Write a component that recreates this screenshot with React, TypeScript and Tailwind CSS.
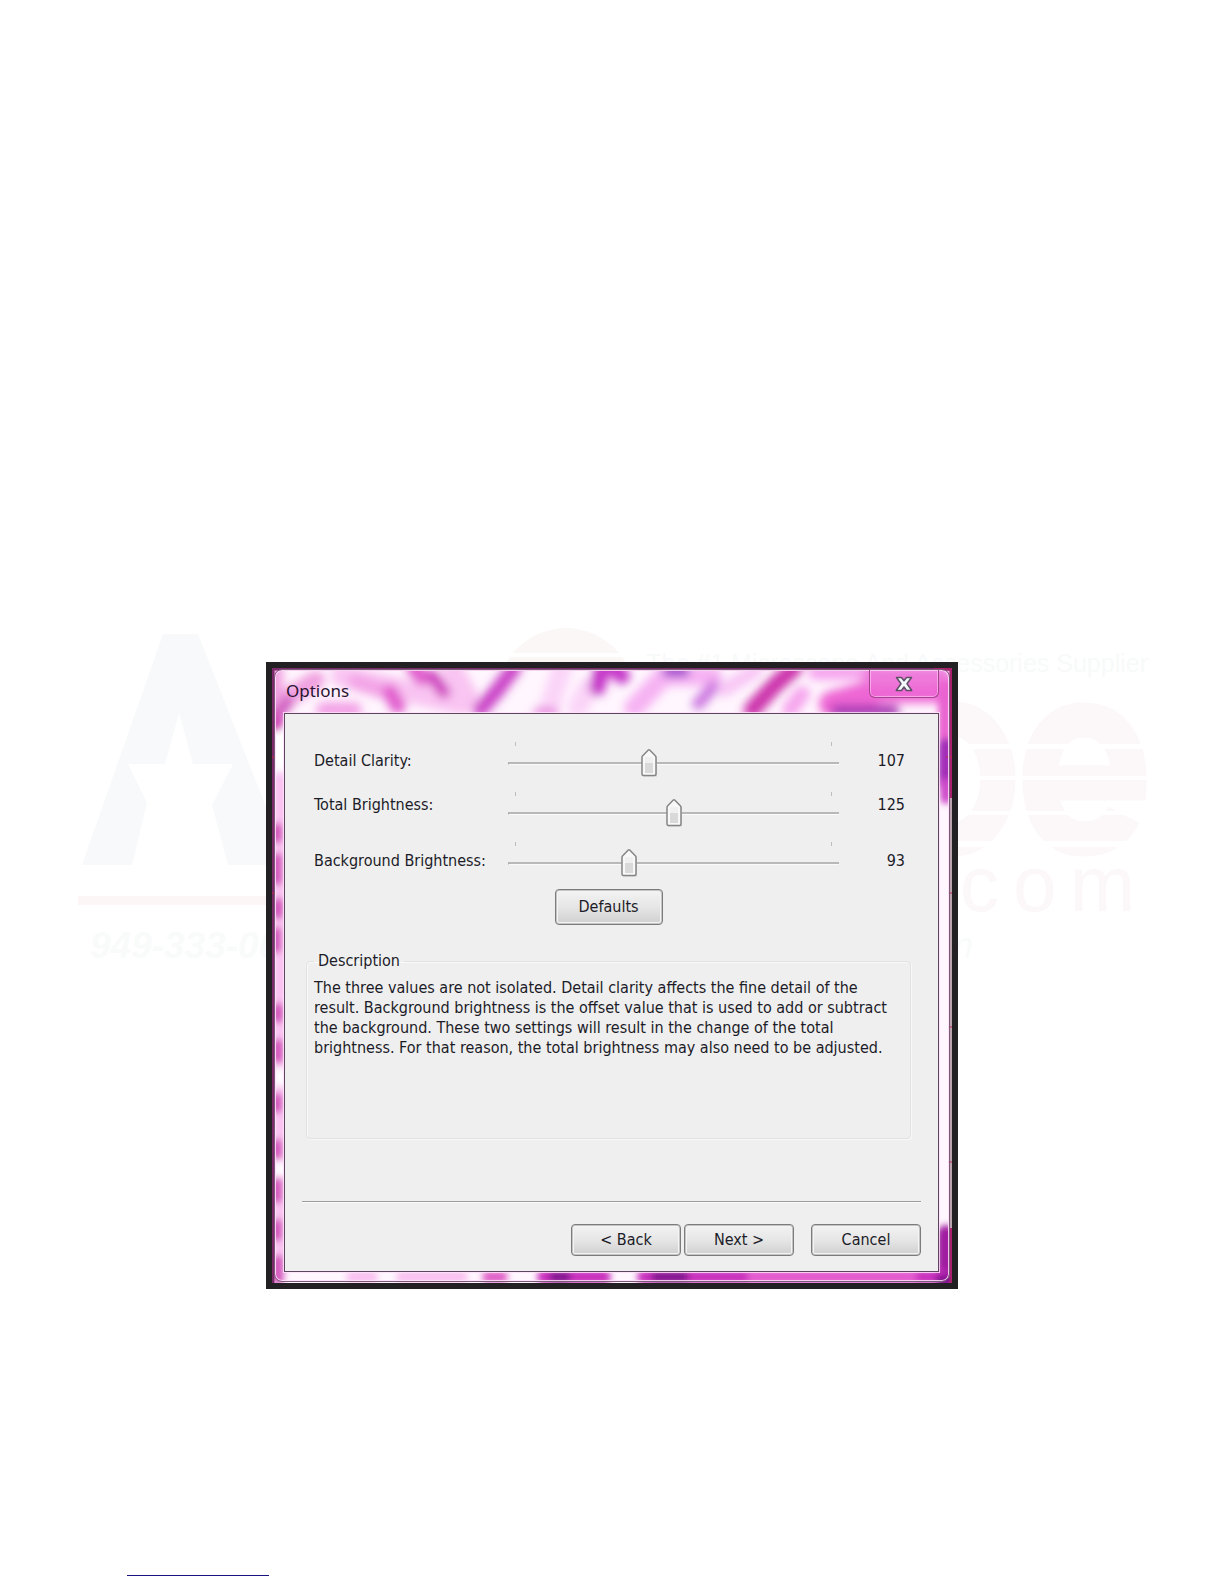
import { useState } from "react";

type Setting = {
  id: string;
  label: string;
  initial: number;
  labelClass: string;
};

const MIN = 10;
const MAX = 240;

const SETTINGS: Setting[] = [
  { id: "detail", label: "Detail Clarity:", initial: 107, labelClass: "pt-[9px]" },
  { id: "total", label: "Total Brightness:", initial: 125, labelClass: "pt-[3px]" },
  { id: "background", label: "Background Brightness:", initial: 93, labelClass: "pt-[9px]" },
];

const DEFAULTS = SETTINGS.map((s) => s.initial);

function Watermark() {
  return (
    <svg
      className="pointer-events-none absolute inset-x-0 top-[620px] w-full"
      viewBox="0 620 1224 360"
      aria-hidden="true"
    >
      <path
        fill="#f7f9fa"
        d="M163 634H198L289 865H228L212 805L233 764H193L179 713L165 764H128L147 803L132 865H82Z"
      />
      <rect x="78" y="896" width="400" height="9" fill="#fdf6f6" />
      <ellipse cx="566" cy="700" rx="70" ry="72" fill="#fcf7f7" />
      <rect x="480" y="653" width="180" height="4" fill="#fff" />
      <g fill="none" stroke="#fcf7f8" strokeWidth="35">
        <ellipse cx="955" cy="779" rx="43" ry="60" />
        <path d="M1040 783H1129C1130 744 1112 720 1084 720C1056 720 1040 744 1040 779C1040 816 1056 839 1084 839C1104 839 1116 830 1124 815" />
      </g>
      <g fill="#fff">
        <rect x="900" y="744" width="260" height="5" />
        <rect x="900" y="776" width="260" height="4" />
        <rect x="900" y="811" width="260" height="4" />
        <rect x="900" y="841" width="260" height="6" />
      </g>
      <g fontFamily="Liberation Sans, sans-serif">
        <text x="960 1013 1070" y="911" fontSize="78" fill="#fcf7f8">
          com
        </text>
        <text x="90" y="958" fontSize="37" fontWeight="700" fontStyle="italic" fill="#f9fbfb">
          949-333-00
        </text>
        <text x="973" y="958" fontSize="37" fontStyle="italic" textAnchor="end" fill="#f9fbfb">
          m
        </text>
        <text x="1148" y="672" fontSize="25" textAnchor="end" fill="#f8fafa">
          The #1 Microscope And Accessories Supplier
        </text>
      </g>
    </svg>
  );
}

// blurred tissue slide that shows through the window glass
function GlassBackdrop() {
  return (
    <svg
      className="absolute inset-0 h-full w-full"
      viewBox="0 0 680 615"
      preserveAspectRatio="none"
      aria-hidden="true"
    >
      <defs>
        <filter id="soft" filterUnits="userSpaceOnUse" x="-30" y="-30" width="740" height="675">
          <feGaussianBlur stdDeviation="5" />
        </filter>
        <filter id="softer" filterUnits="userSpaceOnUse" x="-30" y="-30" width="740" height="675">
          <feGaussianBlur stdDeviation="3" />
        </filter>
      </defs>
      <rect width="680" height="615" fill="#fff6fe" />
      <g filter="url(#soft)" fill="none" strokeLinecap="round">
        <path stroke="#f0a0e0" strokeWidth="18" d="M2 0V50M12 32L44 12" />
        <path stroke="#cf5cc0" strokeWidth="12" d="M4 48L16 34" />
        <path stroke="#f9c4f2" strokeWidth="22" d="M70 8L190 36M180 2L196 30" />
        <path stroke="#f3a3e6" strokeWidth="16" d="M52 42H82M84 14L108 22" />
        <path stroke="#e25fcf" strokeWidth="16" d="M118 24L126 38M142 0L150 10" />
        <path stroke="#cf45c0" strokeWidth="13" d="M160 8L172 24" />
        <path stroke="#ca45c8" strokeWidth="15" d="M242 0L224 24L208 42" />
        <path stroke="#fbd4f8" strokeWidth="20" d="M290 0L276 44M306 40L316 20" />
        <path stroke="#e88ce0" strokeWidth="9" d="M266 44H282" />
        <path stroke="#c535c8" strokeWidth="16" d="M330 2L325 20M342 0L350 8" />
        <path stroke="#f6b2f3" strokeWidth="20" d="M362 40L392 8H440" />
        <path stroke="#a040cc" strokeWidth="12" d="M396 3H412" />
        <path stroke="#cc78e0" strokeWidth="12" d="M426 36L442 18" />
        <path stroke="#f8c5f5" strokeWidth="14" d="M452 22L484 2" />
        <path stroke="#cc35ac" strokeWidth="17" d="M522 0L502 18L480 42" />
        <path stroke="#f6a5ee" strokeWidth="16" d="M544 4H600M530 26L518 42" />
        <path stroke="#ee66d4" strokeWidth="26" d="M560 36L610 22H676" />
        <path stroke="#ee7ada" strokeWidth="20" d="M600 8H670" />
        <path stroke="#a230b0" strokeWidth="11" d="M564 43H622" />
      </g>
      <g filter="url(#softer)" fill="none" strokeLinecap="round">
        <path stroke="#e964d0" strokeWidth="14" d="M673 20V70" />
        <path stroke="#a32fb8" strokeWidth="16" d="M674 78V116" />
        <path stroke="#cf4ccb" strokeWidth="12" d="M674 116V130" />
        <path stroke="#a01da0" strokeWidth="18" d="M674 566V612" />
        <path stroke="#f9c0f0" strokeWidth="12" d="M8 110V606M80 609H100M130 609H190" />
        <path stroke="#fff" strokeWidth="10" d="M8 64V96M8 404V414M8 498V504" />
        <path
          stroke="#d352bc"
          strokeWidth="11"
          d="M5 50V58M5 160V170M5 190V212M6 235V246M4 264V280M6 340V350M6 376V390M5 430V440M5 476V486M5 515V530M5 556V568M6 592V612"
        />
        <path stroke="#e05fc8" strokeWidth="12" d="M216 609H230" />
        <path stroke="#c92fbd" strokeWidth="14" d="M272 609H332M372 609H670" />
        <path stroke="#7b108c" strokeWidth="10" d="M282 609H294M384 609H412M668 612H680" />
        <path stroke="#e75bd0" strokeWidth="10" d="M480 609H640" />
      </g>
      <path stroke="#7a2a68" strokeWidth="3" d="M1 0V615M0 1H680" fill="none" />
      <path stroke="#a8206c" strokeWidth="3" d="M662 1H680M679 0V130M679 560V615" fill="none" />
      <path stroke="#b9a3ac" strokeWidth="2" d="M679 130V560" />
      <path stroke="#c22a50" strokeWidth="1" d="M0 89H3M0 225H3M674 89H680M676 225H680M676 359H680M676 494H680" />
    </svg>
  );
}

function CloseButton() {
  return (
    <button
      type="button"
      aria-label="Close"
      className="grid h-7 w-[70px] place-items-center rounded-b-md border border-t-0 border-[#a6458f] shadow-[inset_0_0_0_1px_rgba(255,200,245,0.6)]"
    >
      <svg width="20" height="18" viewBox="0 0 20 18" aria-hidden="true">
        <path
          d="M2.5 2.5H7.5L10 5.7L12.500 2.5H17.500L13 8.800L17.800 15.500H12.500L10 12L7.500 15.500H2.200L7 8.800Z"
          fill="#f4f8fa"
          stroke="#5f5068"
          strokeWidth="1.5"
          strokeLinejoin="round"
        />
      </svg>
    </button>
  );
}

type SliderProps = {
  id: string;
  value: number;
  onChange: (v: number) => void;
};

function Slider({ id, value, onChange }: SliderProps) {
  const percent = ((value - MIN) / (MAX - MIN)) * 100;

  return (
    <div className="relative h-[34px] flex-1">
      <div className="flex justify-between px-[7px]">
        <span className="h-1 w-px bg-[#bdbdbd]" />
        <span className="h-1 w-px bg-[#bdbdbd]" />
      </div>
      <input
        id={id}
        type="range"
        min={MIN}
        max={MAX}
        value={value}
        onChange={(e) => onChange(Number(e.target.value))}
        className="mt-[5px] block h-6 w-full cursor-pointer appearance-none bg-transparent [&::-webkit-slider-runnable-track]:h-[3px] [&::-webkit-slider-runnable-track]:border-t-2 [&::-webkit-slider-runnable-track]:border-b [&::-webkit-slider-runnable-track]:border-l [&::-webkit-slider-runnable-track]:border-t-[#b8b8b8] [&::-webkit-slider-runnable-track]:border-b-[#fafafa] [&::-webkit-slider-runnable-track]:border-l-[#a8a8a8] [&::-webkit-slider-thumb]:h-0 [&::-webkit-slider-thumb]:w-4 [&::-webkit-slider-thumb]:appearance-none"
      />
      <div className="pointer-events-none absolute inset-x-[7px] top-[6px]">
        <svg
          className="relative -translate-x-1/2"
          style={{ left: `${percent}%` }}
          width="18"
          height="30"
          viewBox="0 0 18 30"
          aria-hidden="true"
        >
          <path d="M3 9L9 2.500L17 9V28.500H3Z" fill="#d4d4d4" />
          <path
            d="M2 9.500Q2 8.500 2.700 7.800L8.300 2Q9 1.300 9.700 2L15.300 7.800Q16 8.500 16 9.500V26Q16 27.500 14.500 27.500H3.500Q2 27.500 2 26Z"
            fill="#f8f8f8"
            stroke="#858585"
            strokeWidth="1.500"
          />
          <rect x="5" y="9" width="8" height="6" fill="#f0f0f0" />
          <rect x="5" y="15" width="8" height="10" fill="#d9d9d9" />
        </svg>
      </div>
    </div>
  );
}

type DialogButtonProps = {
  children: React.ReactNode;
  className: string;
  onClick?: () => void;
};

function DialogButton({ children, className, onClick }: DialogButtonProps) {
  return (
    <button
      type="button"
      onClick={onClick}
      className={`${className} rounded-[4px] border border-[#7c7c7c] bg-linear-to-b from-[#f3f3f3] from-0% via-[#e6e6e6] via-50% to-[#cfcfcf] to-100% leading-5 shadow-[inset_0_0_0_1px_#c4c4c4,inset_0_0_0_2px_#f4f4f4]`}
    >
      {children}
    </button>
  );
}

function OptionsDialog() {
  const [values, setValues] = useState(DEFAULTS);

  function update(index: number, value: number) {
    setValues((prev) => prev.map((v, i) => (i === index ? value : v)));
  }

  return (
    <section
      role="dialog"
      aria-labelledby="dialog-title"
      className="relative w-full max-w-[692px] border-[6px] border-[#222022] font-['DejaVu_Sans_Condensed','DejaVu_Sans',sans-serif] text-base text-[#1c1c28]"
    >
      <GlassBackdrop />
      <div className="relative mx-0.5 mt-px mb-px rounded-lg border border-[#7c5878] pr-[10px] pb-[9px] pl-[9px] shadow-[inset_0_0_0_1px_rgba(255,225,250,0.85)]">
        <header className="flex h-[43px] items-start justify-between">
          <h1
            id="dialog-title"
            className="pt-[9px] pl-0.5 font-['Noto_Sans',sans-serif] text-[17px] leading-6 text-[#2a1430]"
          >
            Options
          </h1>
          <CloseButton />
        </header>

        <div className="border border-[#5d4560] bg-[#efefef] pr-[17px] pb-[15px] pl-[17px] shadow-[0_0_0_1px_rgba(255,225,250,0.8)]">
          <div className="flex flex-col gap-4 pt-7 pr-4 pl-3">
            {SETTINGS.map((setting, i) => (
              <div key={setting.id} className="flex items-start">
                <label
                  htmlFor={setting.id}
                  className={`${setting.labelClass} w-[194px] shrink-0 leading-5 whitespace-nowrap`}
                >
                  {setting.label}
                </label>
                <Slider id={setting.id} value={values[i]} onChange={(v) => update(i, v)} />
                <output
                  htmlFor={setting.id}
                  className={`${setting.labelClass} w-[66px] shrink-0 text-right leading-5`}
                >
                  {values[i]}
                </output>
              </div>
            ))}
          </div>

          <div className="flex justify-center pt-[13px] pr-1.5">
            <DialogButton className="h-9 w-[108px]" onClick={() => setValues(DEFAULTS)}>
              Defaults
            </DialogButton>
          </div>

          <fieldset className="mt-[26px] mr-2.5 ml-1 h-[188px] rounded-sm border border-[#e2e2e2] pr-1 pl-[7px] shadow-[inset_1px_1px_0_#f9f9f9,1px_1px_0_#f7f7f7]">
            <legend className="px-1 leading-5">Description</legend>
            <p className="pt-[7px] leading-5">
              The three values are not isolated. Detail clarity affects the fine detail of the
              result. Background brightness is the offset value that is used to add or subtract
              the background. These two settings will result in the change of the total
              brightness. For that reason, the total brightness may also need to be adjusted.
            </p>
          </fieldset>

          <footer className="mt-[62px] flex justify-end border-t border-[#9c9c9c] pt-[22px] shadow-[inset_0_1px_0_#fbfbfb]">
            <DialogButton className="h-8 w-[110px]">&lt; Back</DialogButton>
            <DialogButton className="ml-[3px] h-8 w-[110px]">Next &gt;</DialogButton>
            <DialogButton className="ml-[17px] h-8 w-[110px]">Cancel</DialogButton>
          </footer>
        </div>
      </div>
    </section>
  );
}

export default function App() {
  return (
    <main className="relative flex min-h-screen flex-col items-center justify-between bg-white pt-[662px] pb-2">
      <Watermark />
      <OptionsDialog />
      <div className="w-full px-[127px]">
        <div className="h-px w-[142px] bg-[#1a1482]" />
      </div>
    </main>
  );
}
